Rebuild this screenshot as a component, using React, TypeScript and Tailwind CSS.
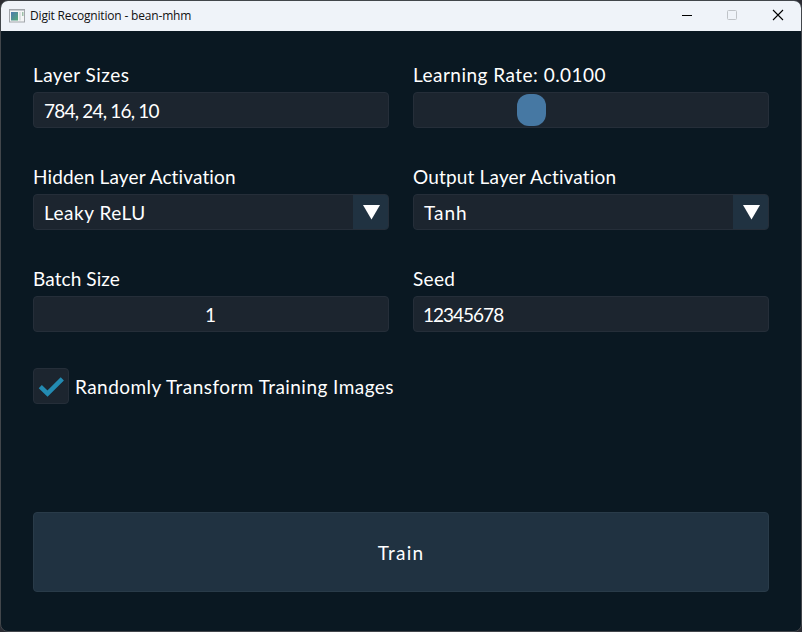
import React from 'react';

const Field = ({ label, children, labelClass }: { label: string; labelClass: string; children: React.ReactNode }) => (
  <div className="flex h-[102px] flex-col">
    <div className="h-[30px] whitespace-nowrap leading-[25px]">
      <span className={labelClass}>{label}</span>
    </div>
    {children}
  </div>
);

const box = 'flex h-9 items-center rounded-[4px] border border-[#252e39] bg-[#1c252f] whitespace-nowrap';

const Select = ({ value, className }: { value: string; className: string }) => (
  <div className={`${box} overflow-hidden justify-between`}>
    <span className={`pl-[10px] pt-[2px] ${className}`}>{value}</span>
    <span className="-my-px -mr-px flex h-9 w-9 justify-center rounded-r-[4px] border border-l-0 border-[#293b49] bg-[#203241]">
      <svg className="shrink-0" width="36" height="34" viewBox="0 0 36 34">
        <path d="M10 10H27L18.5 24.5Z" fill="#fff" />
      </svg>
    </span>
  </div>
);

export default function App() {
  return (
    <div className="h-[632px] w-[802px] overflow-hidden bg-[#2b2c33]">
      <div className="flex h-full w-full flex-col overflow-hidden rounded-[8px] border border-[#42464b] bg-[#0a1822]">
        <header className="flex h-[30px] shrink-0 items-center bg-[#eff3f9] text-[#111]">
          <svg className="ml-2 shrink-0" width="16" height="14" viewBox="0 0 16 14">
            <defs>
              <linearGradient id="screen" x1="0" y1="0" x2="1" y2="1">
                <stop offset="0" stopColor="#4b79b0" />
                <stop offset="1" stopColor="#55a978" />
              </linearGradient>
            </defs>
            <rect x=".5" y=".5" width="15" height="12.5" fill="#f4f5f6" stroke="#a3a7ac" />
            <path d="M1 1.5H15" stroke="#c7cbd0" />
            <rect x="2" y="3" width="7" height="8.5" fill="url(#screen)" />
            <rect x="10" y="3" width="2" height="8.5" fill="#dde2e3" />
            <rect x="13" y="3" width="1.5" height="4" fill="#9dc0a9" />
          </svg>
          <span className="ml-[5px] whitespace-nowrap font-['Open_Sans',sans-serif] text-[12px] tracking-[-0.18px]">Digit Recognition - bean-mhm</span>
          <svg className="ml-auto" width="136" height="30" viewBox="0 0 136 30" fill="none">
            <path d="M17 14.5H27" stroke="#000" />
            <rect x="62.5" y="9.5" width="9" height="9" rx="1" stroke="#bfc3c8" />
            <path d="M108 9L118 19M118 9L108 19" stroke="#000" strokeWidth="1.1" />
          </svg>
        </header>
        <main className="flex flex-1 flex-col px-8 pt-[31px] font-['Lato',sans-serif] text-[19px] text-white">
          <div className="grid grid-cols-2 gap-x-6">
            <Field label="Layer Sizes" labelClass="tracking-[0.45px]">
              <div className={box}><span className="pl-[10px] pt-[2px] tracking-[-0.8px]">784, 24, 16, 10</span></div>
            </Field>
            <Field label="Learning Rate: 0.0100" labelClass="tracking-[0.48px]">
              <div className={box}><span className="ml-[103px] h-8 w-[29px] rounded-[12px] bg-[#4678a3]" /></div>
            </Field>
            <Field label="Hidden Layer Activation" labelClass="tracking-[0.13px]">
              <Select value="Leaky ReLU" className="tracking-[0.5px]" />
            </Field>
            <Field label="Output Layer Activation" labelClass="tracking-[0.17px]">
              <Select value="Tanh" className="tracking-[1px]" />
            </Field>
            <Field label="Batch Size" labelClass="tracking-[0.1px]">
              <div className={`${box} justify-center`}><span className="pr-px pt-[2px]">1</span></div>
            </Field>
            <Field label="Seed" labelClass="tracking-[0.3px]">
              <div className={box}><span className="pl-[9px] pt-[2px] tracking-[-1px]">12345678</span></div>
            </Field>
          </div>
          <div className="flex h-9 items-center whitespace-nowrap">
            <span className="flex h-9 w-9 items-center justify-center rounded-[4px] border border-[#252e39] bg-[#1c252f]">
              <svg width="34" height="34" viewBox="0 0 34 34" fill="none">
                <path d="M6.3 17.7L13.5 24.7L28.3 9.8" stroke="#238bb2" strokeWidth="4.5" />
              </svg>
            </span>
            <span className="pl-[6px] pt-[2px] tracking-[0.45px]">Randomly Transform Training Images</span>
          </div>
          <button className="mt-[108px] h-20 rounded-[4px] border border-[#293b49] bg-[#203241] pt-[2px]">
            <span className="tracking-[1.2px]">Train</span>
          </button>
        </main>
      </div>
    </div>
  );
}
